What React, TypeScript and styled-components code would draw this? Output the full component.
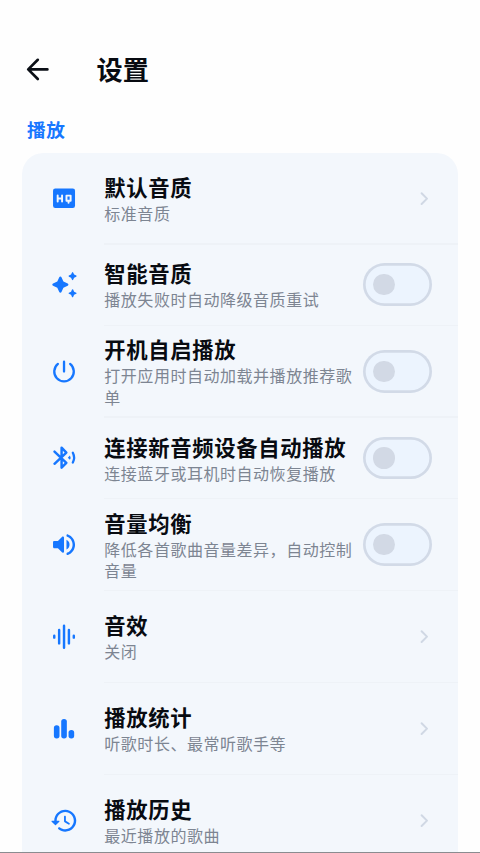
import React from "react";
import styled, { createGlobalStyle } from "styled-components";

const GlobalStyle = createGlobalStyle`
  * { box-sizing: border-box; }
  html, body { margin: 0; background: #fefefe; }
  body { font-family: "Noto Sans CJK SC", sans-serif; overflow: hidden; }
`;

const Screen = styled.main`
  display: flex;
  flex-direction: column;
  height: 853px;
  overflow: hidden;
  border-bottom: 1px solid #8a8c90;
`;

const TopBar = styled.header`
  display: flex;
  align-items: center;
  flex: none;
  height: 58px;
  margin-top: 40px;
  padding-left: 21px;
`;

const BackButton = styled.button`
  display: flex;
  width: 32px;
  height: 32px;
  padding: 0;
  border: 0;
  background: none;
  color: #0b0f16;
`;

const PageTitle = styled.h1`
  margin: 0 0 1px 43.5px;
  color: #080b11;
  font-size: 26.2px;
  font-weight: 700;
  line-height: 38px;
`;

const SectionTitle = styled.h2`
  flex: none;
  margin: 17px 0 11px 27px;
  color: #1677ff;
  font-size: 18.67px;
  font-weight: 700;
  line-height: 27px;
  letter-spacing: 0.6px;
`;

const Card = styled.section`
  flex: none;
  margin: 0 21.67px;
  border-radius: 21.33px 21.33px 0 0;
  background: #f3f7fc;
`;

const Row = styled.div<{ $height: number }>`
  display: flex;
  align-items: center;
  height: ${(p) => p.$height}px;
  padding: 0 26.33px 0 27.67px;
`;

const Divider = styled.hr`
  height: 1.33px;
  margin: -0.67px 0 -0.66px 82.33px;
  border: 0;
  background: #eef2f7;
`;

const IconSlot = styled.span`
  display: flex;
  flex: none;
  width: 29.33px;
  height: 29.33px;
  margin-right: 25.67px;
  color: #1677ff;
`;

const Labels = styled.div`
  flex: 1;
  min-width: 0;
  padding-bottom: 1.2px;
`;

const Name = styled.div`
  color: #080b11;
  font-size: 21.33px;
  font-weight: 700;
  line-height: 32px;
  letter-spacing: 0.67px;
  white-space: nowrap;
`;

const Detail = styled.div`
  color: #7d8592;
  font-size: 16px;
  line-height: 21.33px;
  letter-spacing: 0.53px;
`;

const Switch = styled.button`
  display: flex;
  align-items: center;
  flex: none;
  width: 69.33px;
  height: 42.67px;
  margin-left: 8px;
  padding: 0 0 0 10.67px;
  border: 0;
  box-shadow: inset 0 0 0 2.67px #d2dae7;
  border-radius: 22px;
  background: #ecf4fe;
`;

const Knob = styled.span`
  width: 21.33px;
  height: 21.33px;
  border-radius: 50%;
  background: #d2d9e5;
`;

const Chevron = styled.svg`
  flex: none;
  width: 16px;
  height: 16px;
  color: #d0d8e4;
`;

const Glyph = ({ children }: { children: React.ReactNode }) => (
  <svg width="100%" height="100%" viewBox="-0.3 0 24 24" fill="currentColor">
    {children}
  </svg>
);

const stroke = {
  fill: "none",
  stroke: "currentColor",
  strokeWidth: 2,
  strokeLinecap: "round" as const,
  strokeLinejoin: "round" as const,
};

const icons = {
  quality: (
    <>
      <rect x="3" y="3.7" width="18" height="16" rx="1.8" />
      <path
        {...stroke}
        stroke="#f3f7fc"
        strokeWidth={1.6}
        d="M6.8 9.4v5M10.4 9.4v5M6.8 11.9h3.6M14 9.5h3.4v4.2H14zM15.7 13.9v1.4"
      />
    </>
  ),
  sparkle: (
    <path d="M19.46 8l.79-1.75L22 5.46a.5.5 0 0 0 0-.91l-1.75-.79L19.46 2a.5.5 0 0 0-.91 0l-.79 1.75-1.76.79a.5.5 0 0 0 0 .91l1.75.79.79 1.76c.18.39.74.39.92 0zM11.5 9.5L9.91 6c-.35-.78-1.47-.78-1.82 0L6.5 9.5 3 11.09c-.78.36-.78 1.47 0 1.82l3.5 1.59L8.09 18c.36.78 1.47.78 1.82 0l1.59-3.5 3.5-1.59c.78-.36.78-1.47 0-1.82L11.5 9.5zm7.04 6.5l-.79 1.75-1.75.79a.5.5 0 0 0 0 .91l1.75.79.79 1.76a.5.5 0 0 0 .91 0l.79-1.75 1.76-.79a.5.5 0 0 0 0-.91l-1.75-.79-.79-1.76a.51.51 0 0 0-.92 0z" />
  ),
  power: <path {...stroke} strokeWidth={1.9} d="M12 3.9v8M7 5.7a8 8 0 1 0 10 0" />,
  bluetooth: (
    <>
      <path {...stroke} d="M4.2 7l9.7 9.2-3.9 4V3.8l3.9 4-9.7 9.2" />
      <path d="M15.1 12l1.7-1.7q1.1 1.7 0 3.4z" />
      <path {...stroke} strokeWidth={1.9} d="M19.2 8q2.1 4 0 8" />
    </>
  ),
  volume: (
    <path d="M3 10v4c0 .55.45 1 1 1h3l3.29 3.29c.63.63 1.71.18 1.71-.71V6.41c0-.89-1.08-1.34-1.71-.71L7 9H4c-.55 0-1 .45-1 1zm13.5 2A4.5 4.5 0 0 0 14 7.97v8.05c1.48-.73 2.5-2.25 2.5-4.02zM14 4.45v.2c0 .38.25.71.6.85C17.18 6.53 19 9.06 19 12s-1.82 5.47-4.4 6.5c-.36.14-.6.47-.6.85v.2c0 .63.63 1.07 1.21.85C18.6 19.11 21 15.84 21 12s-2.4-7.11-5.79-8.4c-.58-.23-1.21.22-1.21.85z" />
  ),
  equalizer: <path {...stroke} d="M4 11.2v1.6M8 6.5v11M12 3v18M16 6.5v11M20 11.2v1.6" />,
  stats: (
    <>
      <rect x="3.7" y="9.2" width="4.6" height="10.8" rx="2.2" />
      <rect x="9.7" y="4" width="4.6" height="16" rx="2.2" />
      <rect x="15.7" y="13" width="4.6" height="7" rx="2.2" />
    </>
  ),
  history: (
    <path d="M13.26 3C8.17 2.86 4 6.95 4 12H2.21c-.45 0-.67.54-.35.85l2.79 2.8c.2.2.51.2.71 0l2.79-2.8c.31-.31.09-.85-.36-.85H6c0-3.9 3.18-7.05 7.1-7 3.72.05 6.85 3.18 6.9 6.9.05 3.91-3.1 7.1-7 7.1-1.61 0-3.1-.55-4.28-1.48-.4-.31-.96-.28-1.32.08-.42.42-.39 1.13.08 1.49C9 20.29 10.91 21 13 21c5.05 0 9.14-4.17 9-9.26-.13-4.69-4.05-8.61-8.74-8.74zm-.51 5c-.41 0-.75.34-.75.75v3.68c0 .35.19.68.49.86l3.12 1.85c.36.21.82.09 1.03-.26.21-.36.09-.82-.26-1.03l-2.88-1.71v-3.4c0-.4-.34-.74-.75-.74z" />
  ),
};

type Setting = {
  icon: keyof typeof icons;
  name: string;
  detail: string;
  height: number;
  toggle?: boolean;
};

const settings: Setting[] = [
  { icon: "quality", name: "默认音质", detail: "标准音质", height: 91 },
  { icon: "sparkle", name: "智能音质", detail: "播放失败时自动降级音质重试", height: 81.3, toggle: true },
  { icon: "power", name: "开机自启播放", detail: "打开应用时自动加载并播放推荐歌单", height: 91.8, toggle: true },
  { icon: "bluetooth", name: "连接新音频设备自动播放", detail: "连接蓝牙或耳机时自动恢复播放", height: 81.5, toggle: true },
  { icon: "volume", name: "音量均衡", detail: "降低各首歌曲音量差异，自动控制音量", height: 92, toggle: true },
  { icon: "equalizer", name: "音效", detail: "关闭", height: 92 },
  { icon: "stats", name: "播放统计", detail: "听歌时长、最常听歌手等", height: 92 },
  { icon: "history", name: "播放历史", detail: "最近播放的歌曲", height: 92 },
];

export default function App() {
  return (
    <>
      <GlobalStyle />
      <Screen>
        <TopBar>
          <BackButton aria-label="返回">
            <Glyph>
              <path {...stroke} d="M19.5 12.3H5.8M12.3 5.1l-7.2 7.2 7.2 7.2" />
            </Glyph>
          </BackButton>
          <PageTitle>设置</PageTitle>
        </TopBar>
        <SectionTitle>播放</SectionTitle>
        <Card>
          {settings.map((item, i) => (
            <React.Fragment key={item.name}>
              {i > 0 && <Divider />}
              <Row $height={item.height}>
                <IconSlot>
                  <Glyph>{icons[item.icon]}</Glyph>
                </IconSlot>
                <Labels>
                  <Name>{item.name}</Name>
                  <Detail>{item.detail}</Detail>
                </Labels>
                {item.toggle ? (
                  <Switch role="switch" aria-checked={false} aria-label={item.name}>
                    <Knob />
                  </Switch>
                ) : (
                  <Chevron viewBox="0 0 16 16">
                    <path {...stroke} d="M5.6 2.2L11 7.6 5.6 13" />
                  </Chevron>
                )}
              </Row>
            </React.Fragment>
          ))}
        </Card>
      </Screen>
    </>
  );
}
